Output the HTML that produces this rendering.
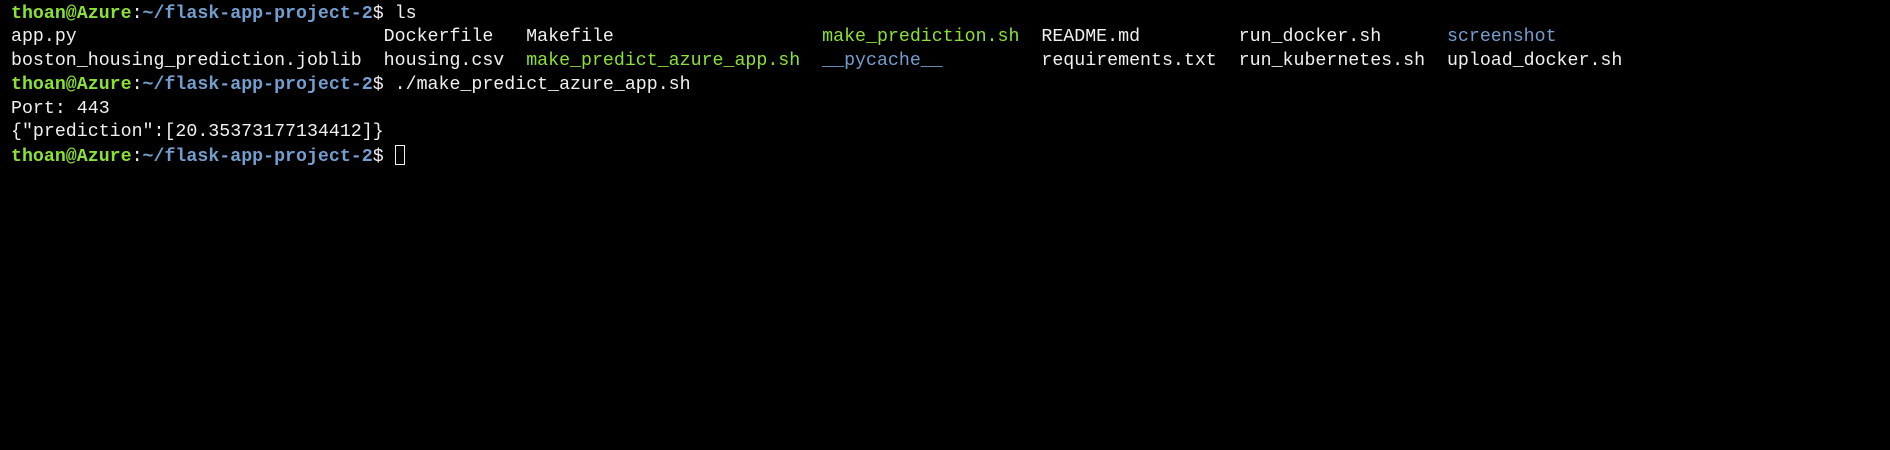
<!DOCTYPE html>
<html><head><meta charset="utf-8"><style>
html,body{margin:0;padding:0;background:#000;width:1890px;height:450px;overflow:hidden}
pre{margin:0;position:absolute;left:11px;top:-21px;font-family:"Liberation Mono",monospace;font-size:18.27px;line-height:23.7px;color:#f0f0f0;white-space:pre}
.g{color:#8ae234;font-weight:bold}.b{color:#729fcf;font-weight:bold}
.gn{color:#8ae234}.bl{color:#729fcf}
.cur{display:inline-block;width:10px;height:20px;border:1px solid #f0f0f0;vertical-align:-4px;box-sizing:border-box}
</style></head><body><pre>

<span class="g">thoan@Azure</span>:<span class="b">~/flask-app-project-2</span>$ ls
app.py                            Dockerfile   Makefile                   <span class="gn">make_prediction.sh</span>  README.md         run_docker.sh      <span class="bl">screenshot</span>
boston_housing_prediction.joblib  housing.csv  <span class="gn">make_predict_azure_app.sh</span>  <span class="bl">__pycache__</span>         requirements.txt  run_kubernetes.sh  upload_docker.sh
<span class="g">thoan@Azure</span>:<span class="b">~/flask-app-project-2</span>$ ./make_predict_azure_app.sh
Port: 443
{"prediction":[20.35373177134412]}
<span class="g">thoan@Azure</span>:<span class="b">~/flask-app-project-2</span>$ <span class="cur"></span></pre>
</body></html>
